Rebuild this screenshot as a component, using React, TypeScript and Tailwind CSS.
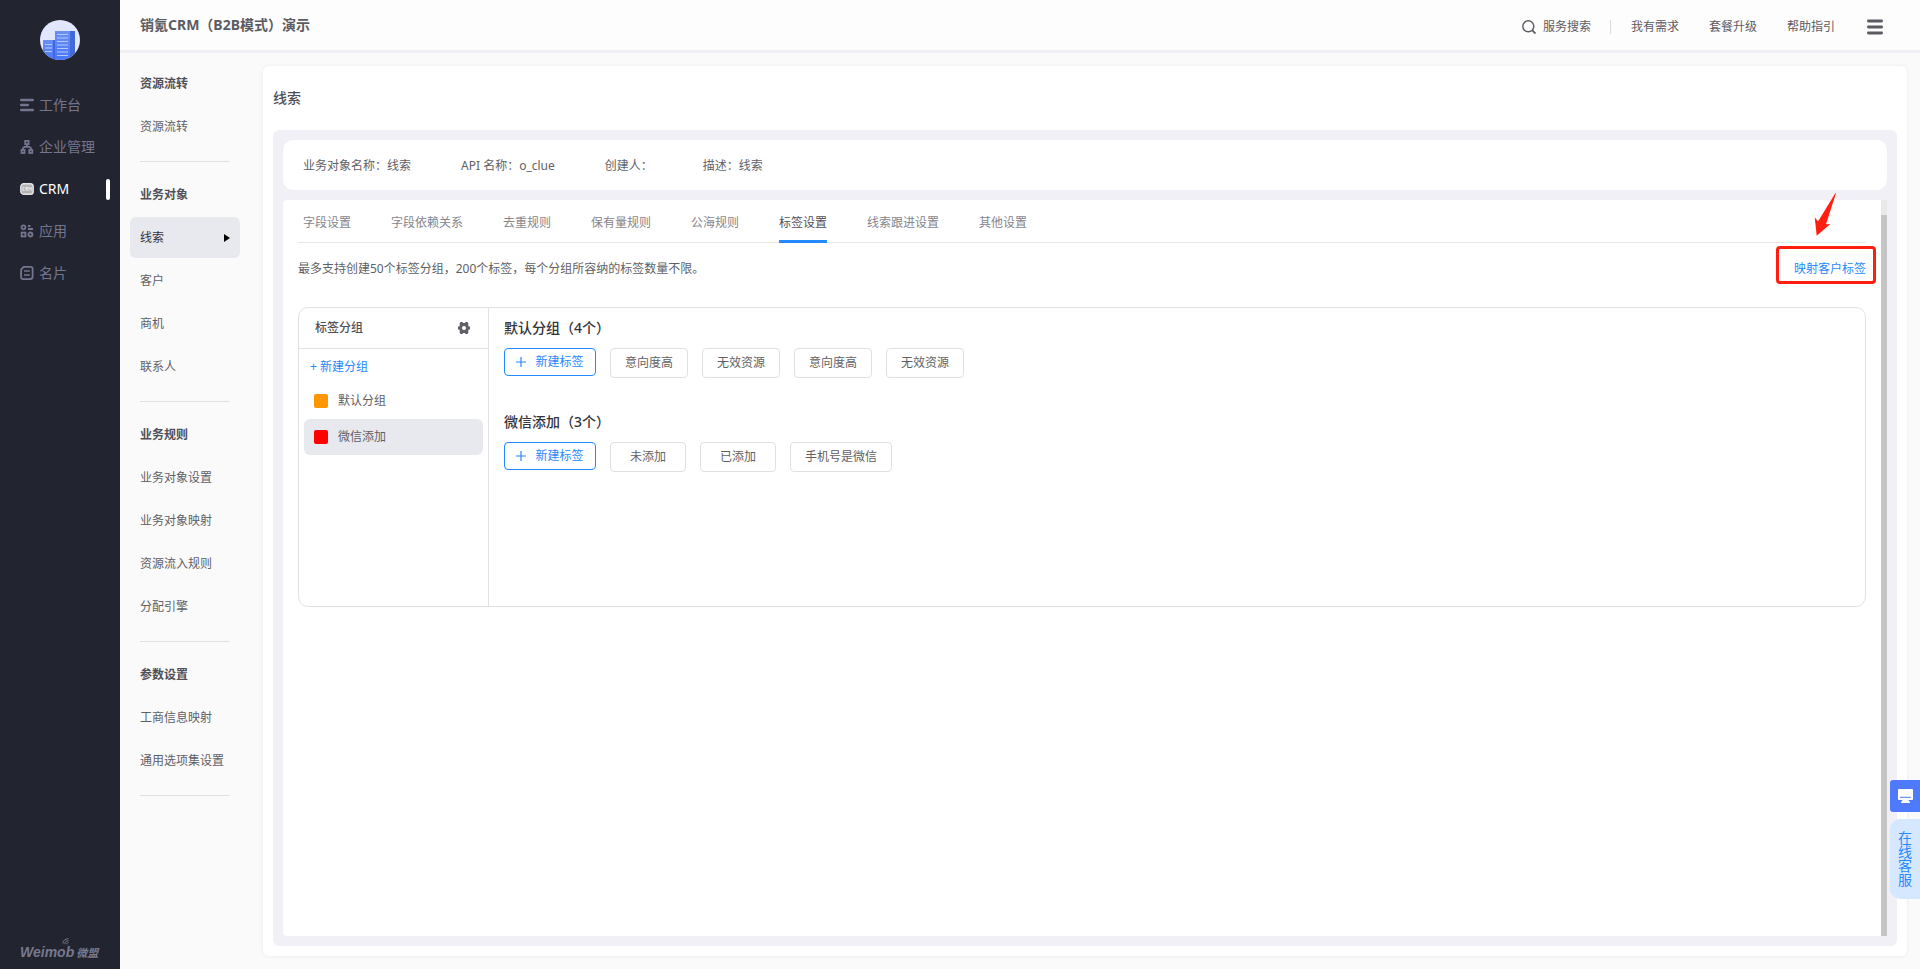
import type { ReactNode } from "react";
import clsx from "clsx";

const mainNav = [
  { label: "工作台", icon: <WorkbenchIcon /> },
  { label: "企业管理", icon: <OrgIcon /> },
  { label: "CRM", icon: <CrmIcon />, active: true },
  { label: "应用", icon: <AppsIcon /> },
  { label: "名片", icon: <CardIcon /> },
];

const sideSections = [
  { title: "资源流转", items: ["资源流转"] },
  { title: "业务对象", items: ["线索", "客户", "商机", "联系人"] },
  {
    title: "业务规则",
    items: ["业务对象设置", "业务对象映射", "资源流入规则", "分配引擎"],
  },
  { title: "参数设置", items: ["工商信息映射", "通用选项集设置"] },
];

const tabs = [
  "字段设置",
  "字段依赖关系",
  "去重规则",
  "保有量规则",
  "公海规则",
  "标签设置",
  "线索跟进设置",
  "其他设置",
];

const info = ["业务对象名称：线索", "API 名称：o_clue", "创建人：", "描述：线索"];

const groups = [
  {
    name: "默认分组",
    color: "bg-[#ff9500]",
    tags: ["意向度高", "无效资源", "意向度高", "无效资源"],
  },
  {
    name: "微信添加",
    color: "bg-[#ff0000]",
    tags: ["未添加", "已添加", "手机号是微信"],
    active: true,
  },
];

function WorkbenchIcon() {
  return (
    <svg width="14" height="14" viewBox="0 0 14 14" stroke="currentColor" strokeWidth="2.4" strokeLinecap="round">
      <path d="M1.2 2h11.6M1.2 7h6.6M1.2 12h11.6" />
    </svg>
  );
}

function OrgIcon() {
  return (
    <svg width="14" height="14" viewBox="0 0 14 14" fill="none" stroke="currentColor" strokeWidth="1.8">
      <rect x="5.2" y="0.9" width="3.4" height="3.2" />
      <rect x="1.5" y="10" width="3" height="3" />
      <rect x="9.3" y="10" width="3" height="3" />
      <path d="M6.9 4.1v2.7M3 10V8.2l1.5-1.4h4.9l1.5 1.4V10" />
    </svg>
  );
}

function CrmIcon() {
  return (
    <svg width="14" height="14" viewBox="0 0 14 14" fill="none">
      <rect x="0.8" y="1.8" width="12.4" height="10.4" rx="2.8" fill="#b4b4b4" stroke="#e6e6e6" strokeWidth="1.4" />
      <path
        d="M4.6 5.5H3v3h1.6M6 8.7V5.4h1.6v1.5H6.2l1.5 1.8M9 8.7V5.4l1.1 1.5 1.1-1.5v3.3"
        stroke="#f4f4f4"
        strokeWidth="0.8"
      />
    </svg>
  );
}

function AppsIcon() {
  return (
    <svg width="14" height="14" viewBox="0 0 14 14" fill="none" stroke="currentColor" strokeWidth="1.8">
      <circle cx="3.5" cy="3.3" r="2" />
      <rect x="1.6" y="8.6" width="3.8" height="3.8" />
      <circle cx="10.4" cy="10.5" r="2" />
      <path d="M8 2h2.4M8 5h5" />
    </svg>
  );
}

function CardIcon() {
  return (
    <svg width="14" height="14" viewBox="0 0 14 14" fill="none" stroke="currentColor" strokeWidth="1.8">
      <path d="M3.6 0.9h7.2c1.2 0 1.8.6 1.8 1.8v7.8c0 1.6-1 2.6-2.6 2.6H3.2c-1.4 0-2.1-.7-2.1-2.1V3.6z" />
      <path d="M4 5h5.800M4 9h5.800" strokeWidth="1.4" />
    </svg>
  );
}

function GearIcon() {
  return (
    <svg width="12" height="12" viewBox="0 0 12 12">
      <path
        fill="#606066"
        fillRule="evenodd"
        d="M2.500 0h2l.6.9h1.800l.6-.9h2l1 1.800-.4 1.400.7 1.300H12v3h-1.200l-.7 1.300.4 1.400-1 1.800h-2l-.6-.9H5.100l-.6.9h-2l-1-1.800.4-1.400-.7-1.300H0v-3h1.200l.7-1.300-.4-1.400zM6 4a2 2 0 100 4 2 2 0 000-4z"
      />
    </svg>
  );
}

function BuildingLogo() {
  return (
    <svg width="40" height="40" viewBox="0 0 40 40">
      <defs>
        <clipPath id="disc">
          <circle cx="20" cy="20" r="20" />
        </clipPath>
        <linearGradient id="tower" x1="0" y1="0" x2="0" y2="1">
          <stop offset="0" stopColor="#6a90f4" />
          <stop offset="1" stopColor="#4876fb" />
        </linearGradient>
      </defs>
      <g clipPath="url(#disc)">
        <rect width="40" height="40" fill="#e1e7fe" />
        <rect x="3" y="20" width="13" height="20" fill="url(#tower)" />
        <rect x="13" y="20" width="3" height="20" fill="#3f68e0" />
        <rect x="15" y="11" width="16" height="29" fill="url(#tower)" />
        <rect x="30" y="11" width="5" height="29" fill="#426ad6" />
        <path
          d="M17 14.500h11M17 18h11M17 21.500h11M17 25h11M17 28.500h11M17 32h11M17 35.500h11M5 24.500h7M5 28h7M5 31.500h7"
          stroke="#b5c9ff"
          strokeWidth="1.2"
        />
      </g>
    </svg>
  );
}

function MainSidebar() {
  return (
    <nav className="w-[120px] shrink-0 bg-[#22242f] flex flex-col text-[#74768f]">
      <a href="#" aria-label="Weimob" className="flex justify-center pt-5 pb-6">
        <BuildingLogo />
      </a>
      {mainNav.map((item) => (
        <a
          key={item.label}
          href="#"
          className={clsx(
            "h-[42px] pl-5 pr-[10px] flex items-center gap-[5px] text-sm",
            item.active && "text-white",
          )}
        >
          {item.icon}
          <span>{item.label}</span>
          {item.active && <span className="ml-auto w-1 h-[21px] rounded-sm bg-white" />}
        </a>
      ))}
      <div className="relative mt-auto pl-5 pb-[6px] flex items-baseline gap-[2px] italic font-bold text-[#77798f] leading-5">
        <span className="font-['Liberation_Sans',sans-serif] text-sm leading-5">Weimob</span>
        <span className="text-[11px]">微盟</span>
        <svg className="absolute left-[62px] -top-1" width="8" height="7" viewBox="0 0 8 7" fill="none" stroke="currentColor">
          <path d="M1 5.500C1 2.500 3 .8 6.500.7M2.800 6C3 4 4.200 2.800 6.500 2.700M4.600 6.300c.1-1 .8-1.600 1.900-1.700" />
        </svg>
      </div>
    </nav>
  );
}

function Header() {
  return (
    <header className="h-[53px] shrink-0 border-b-3 border-[#f1f1f5] bg-[#fdfdfd] flex items-center pl-5 pr-[37px] text-[#5b5b63]">
      <h1 className="text-sm font-bold">销氪CRM（B2B模式）演示</h1>
      <div className="ml-auto pt-1 flex items-center text-xs">
        <a href="#" className="flex items-center gap-[7px]">
          <svg width="14" height="14" viewBox="0 0 14 14" fill="none" stroke="currentColor" strokeWidth="1.4">
            <circle cx="6.300" cy="6.300" r="5.500" />
            <path d="M10.300 10.300l3.200 3.200" strokeWidth="1.800" />
          </svg>
          服务搜索
        </a>
        <span className="w-px h-[14px] ml-[19px] mr-5 bg-[#dcdce0]" />
        <div className="flex gap-[30px]">
          <a href="#">我有需求</a>
          <a href="#">套餐升级</a>
          <a href="#">帮助指引</a>
        </div>
        <button type="button" aria-label="菜单" className="ml-8">
          <svg width="16" height="16" viewBox="0 0 16 16" stroke="currentColor" strokeWidth="2.800" strokeLinecap="round">
            <path d="M1.400 2h13.200M1.400 8h13.200M1.400 14h13.200" />
          </svg>
        </button>
      </div>
    </header>
  );
}

function SubNav() {
  return (
    <aside className="w-[143px] shrink-0 pt-[10px] text-xs text-[#5f5f66]">
      {sideSections.map((section) => (
        <section key={section.title} className="mb-3">
          <h2 className="h-[41px] pl-5 flex items-center font-bold text-[#4f4f57]">{section.title}</h2>
          {section.items.map((item) => {
            const active = item === "线索";
            return (
              <a
                key={item}
                href="#"
                className={clsx(
                  "h-[41px] mt-[2px] ml-[10px] mr-[23px] px-[10px] flex items-center justify-between rounded-md whitespace-nowrap",
                  active && "bg-[#e8e9ef] text-[#33333b]",
                )}
              >
                {item}
                {active && (
                  <svg width="6" height="8" viewBox="0 0 6 8">
                    <path d="M0 0l6 4-6 4z" fill="#000" />
                  </svg>
                )}
              </a>
            );
          })}
          <hr className="mt-[14px] ml-5 mr-[33px] border-[#e0e0e2]" />
        </section>
      ))}
    </aside>
  );
}

function AddTagButton() {
  return (
    <button
      type="button"
      className="h-7 w-[92px] flex items-center justify-center gap-[9px] rounded border border-[#2589ff] text-[#2589ff]"
    >
      <svg width="10" height="10" viewBox="0 0 10 10" stroke="currentColor" strokeWidth="1.200">
        <path d="M0 5h10M5 0v10" />
      </svg>
      新建标签
    </button>
  );
}

function TagBoard() {
  return (
    <div className="mt-3 h-[300px] flex rounded-[10px] border border-[#e2e2e4]">
      <div className="w-[190px] shrink-0 border-r border-[#e2e2e4]">
        <div className="h-[41px] pl-4 pr-[18px] flex items-center justify-between border-b border-[#e2e2e4]">
          <h3 className="font-medium text-[#4f4f57]">标签分组</h3>
          <button type="button" aria-label="设置">
            <GearIcon />
          </button>
        </div>
        <button type="button" className="h-[34px] pl-[11px] pt-px flex items-center text-[#2589ff]">
          + 新建分组
        </button>
        {groups.map((group) => (
          <button
            type="button"
            key={group.name}
            className={clsx(
              "h-9 w-[179px] ml-[5px] pl-[10px] flex items-center gap-[10px] rounded-md",
              group.active && "bg-[#e8e9ef]",
            )}
          >
            <span className={clsx("size-[14px] rounded-xs", group.color)} />
            {group.name}
          </button>
        ))}
      </div>
      <div className="pl-[15px] pt-[10px]">
        {groups.map((group) => (
          <Group key={group.name} title={`${group.name}（${group.tags.length}个）`}>
            {group.tags.map((tag, i) => (
              <span
                key={i}
                className="h-[30px] min-w-[76px] px-[14px] flex items-center justify-center rounded border border-[#e0e0e3]"
              >
                {tag}
              </span>
            ))}
          </Group>
        ))}
      </div>
    </div>
  );
}

function Group({ title, children }: { title: string; children: ReactNode }) {
  return (
    <section className="mb-[34px]">
      <h3 className="h-5 mb-[10px] text-sm leading-5 font-medium text-[#33333b]">{title}</h3>
      <div className="flex flex-wrap items-start gap-[14px]">
        <AddTagButton />
        {children}
      </div>
    </section>
  );
}

function MapLink() {
  return (
    <div className="relative">
      <a href="#" className="text-[#2589ff]">
        映射客户标签
      </a>
      <span className="absolute -left-[18px] -right-[10px] -top-[15px] h-[38px] rounded border-3 border-[#ff1e10] pointer-events-none" />
      <svg className="absolute left-5 -top-[69px]" width="22" height="44" viewBox="0 0 22 44">
        <path d="M21.600 0.800L4 29.600 0.700 25.300 2.700 43.700 16.400 32 12 32.300 21.900 1.500z" fill="#ff1e10" />
      </svg>
    </div>
  );
}

function FloatingHelp() {
  return (
    <div className="absolute right-0 bottom-[70px] w-[30px]">
      <button
        type="button"
        aria-label="反馈"
        className="h-8 w-full flex items-center justify-center rounded-l-[3px] bg-[#4f7afd]"
      >
        <svg width="15" height="14" viewBox="0 0 15 14">
          <rect width="15" height="11" rx="1" fill="#fff" />
          <path d="M2 8.300h11" stroke="#4f7afd" />
          <path d="M4.500 11h6l.5 1.500h1V14H3v-1.500h1z" fill="#fff" />
        </svg>
      </button>
      <a
        href="#"
        className="mt-[7px] h-20 flex items-center justify-center rounded-l-[10px] bg-[#d6e8ff] text-sm text-[#2589ff]"
      >
        <span className="w-[14px] leading-[14px] break-all">在线客服</span>
      </a>
    </div>
  );
}

export default function App() {
  return (
    <div className="relative min-h-screen flex bg-[#fafafa] font-['Noto_Sans','Noto_Sans_CJK_SC',sans-serif]">
      <MainSidebar />
      <div className="flex-1 min-w-0 flex flex-col">
        <Header />
        <div className="flex-1 flex">
          <SubNav />
          <main className="flex-1 min-w-0 mt-[13px] mb-[13px] mr-[13px] px-[10px] pb-[10px] flex flex-col rounded-md bg-white shadow-[0_0_4px_rgba(0,0,0,0.07)] text-xs text-[#5f5f66]">
            <h2 className="h-16 flex items-center text-sm font-medium text-[#4f4f57]">线索</h2>
            <div className="flex-1 p-[10px] flex flex-col gap-[10px] rounded-md bg-[#f1f0f6]">
              <div className="h-[50px] px-5 pt-[2px] flex items-center gap-[50px] rounded-[10px] bg-white">
                {info.map((text) => (
                  <span key={text}>{text}</span>
                ))}
              </div>
              <div className="flex-1 flex rounded-l-[4px] bg-white">
                <div className="flex-1 min-w-0 px-[15px]">
                  <div role="tablist" className="h-[43px] px-[5px] flex gap-10 border-b border-[#e5e5e7]">
                    {tabs.map((tab) => {
                      const active = tab === "标签设置";
                      return (
                        <button
                          key={tab}
                          type="button"
                          role="tab"
                          aria-selected={active}
                          className={clsx(
                            "h-[43px] pt-[5px] border-b-3",
                            active
                              ? "border-[#2589ff] text-[#4f4f57]"
                              : "border-transparent text-[#85858c]",
                          )}
                        >
                          {tab}
                        </button>
                      );
                    })}
                  </div>
                  <div className="h-[52px] flex items-center justify-between">
                    <p>最多支持创建50个标签分组，200个标签，每个分组所容纳的标签数量不限。</p>
                    <MapLink />
                  </div>
                  <TagBoard />
                </div>
                <div className="w-[6px] pt-[15px] flex flex-col bg-[#e9e9ea]">
                  <div className="flex-1 bg-[#c4c4c4]" />
                </div>
              </div>
            </div>
          </main>
        </div>
      </div>
      <FloatingHelp />
    </div>
  );
}
